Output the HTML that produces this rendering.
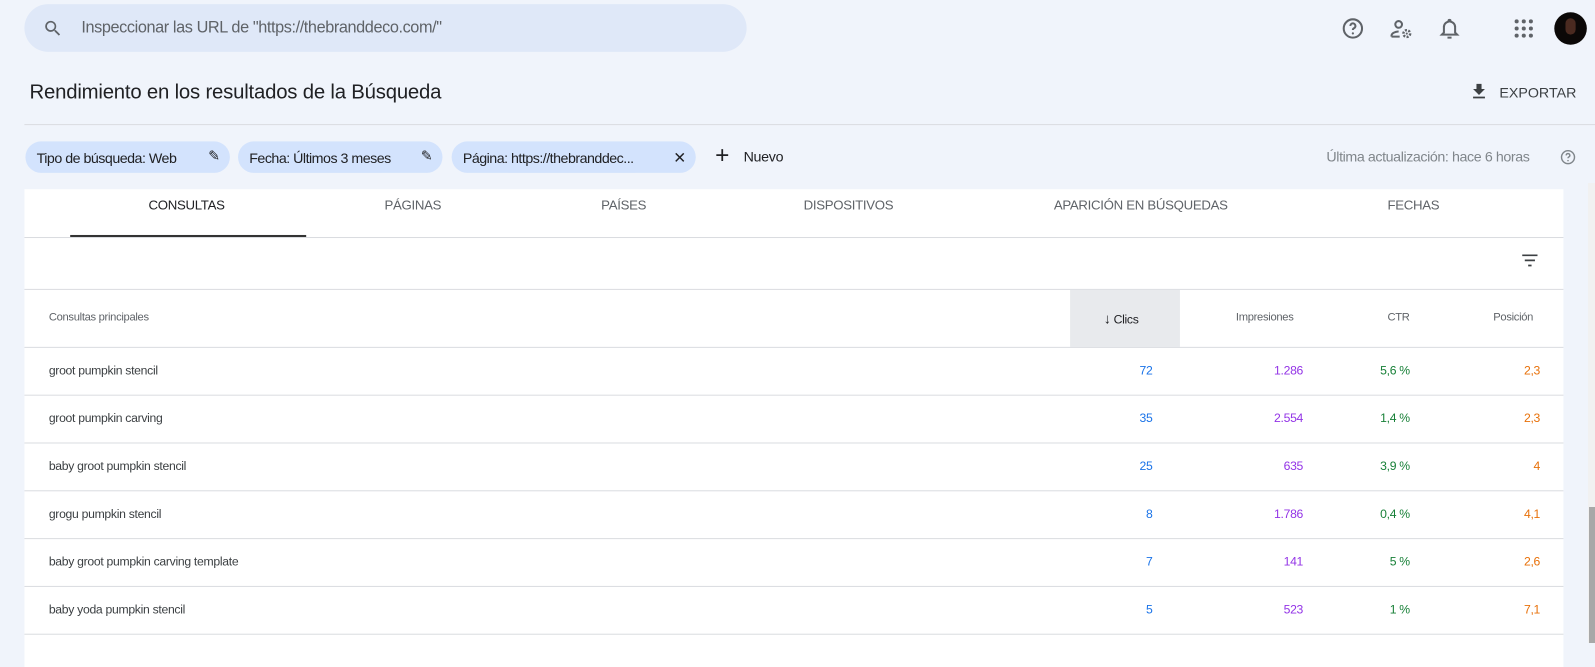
<!DOCTYPE html>
<html><head><meta charset="utf-8"><style>
*{margin:0;padding:0;box-sizing:border-box}
body{width:1595px;height:643px;overflow:hidden;background:#f0f4fb;font-family:"Liberation Sans",sans-serif;color:#3c4043;position:relative}
#w{position:absolute;left:0;top:0;width:1568px;height:632px;transform:scale(1.0172);transform-origin:0 0}
.abs{position:absolute}
.search{left:24px;top:4px;width:710px;height:47px;background:#dfe8f8;border-radius:24px}
.search span{position:absolute;left:56px;top:15px;font-size:16px;color:#5f6368;letter-spacing:-0.4px}
.title{left:29px;top:80px;font-size:20px;color:#202124;letter-spacing:-0.2px}
.hr{left:24px;top:122px;width:1571px;height:1px;background:#dadce0}
.chip{top:139px;height:31px;background:#d3e3fd;border-radius:16px;font-size:14px;color:#202124;padding:8px 11px;white-space:nowrap;letter-spacing:-0.5px}
.card{left:24px;top:186px;width:1513px;height:470px;background:#fff}
.tab{top:194px;font-size:13px;color:#5f6368;letter-spacing:-0.3px}
.line{height:1px;background:#dadce0;left:24px;width:1513px}
.cell{font-size:12px;letter-spacing:-0.3px}
.q{left:48px;color:#3c4043}
.r{text-align:right}
</style></head><body>
<div id="w">
<div class="abs search">
<svg class="abs" style="left:18px;top:14px" width="20" height="20" viewBox="0 0 24 24"><path d="M15.5 14h-.8l-.3-.3A6.5 6.5 0 1 0 9.5 16a6.5 6.5 0 0 0 4.2-1.6l.3.3v.8l5 5 1.5-1.5-5-5zm-6 0A4.5 4.5 0 1 1 14 9.5 4.5 4.5 0 0 1 9.5 14z" fill="#5f6368"/></svg>
<span>Inspeccionar las URL de "https://thebranddeco.com/"</span></div>
<svg class="abs" style="left:1318px;top:16px" width="24" height="24" viewBox="0 0 24 24"><circle cx="12" cy="12" r="9" fill="none" stroke="#5f6368" stroke-width="2"/><path d="M9.5 9.5a2.5 2.5 0 1 1 3.5 2.3c-.7.4-1 .9-1 1.7" fill="none" stroke="#5f6368" stroke-width="2"/><circle cx="12" cy="16.8" r="1.1" fill="#5f6368"/></svg>
<svg class="abs" style="left:1366px;top:16px" width="24" height="24" viewBox="0 0 24 24"><circle cx="9" cy="8" r="3.3" fill="none" stroke="#5f6368" stroke-width="2"/><path d="M2 20v-1c0-2.5 4-4 7-4" fill="none" stroke="#5f6368" stroke-width="2"/><path d="M2 20h8" stroke="#5f6368" stroke-width="2"/><circle cx="17" cy="17" r="3.3" fill="none" stroke="#5f6368" stroke-width="2.4" stroke-dasharray="2 1.4"/><circle cx="17" cy="17" r="1" fill="#5f6368"/></svg>
<svg class="abs" style="left:1413px;top:16px" width="24" height="24" viewBox="0 0 24 24"><path d="M12 3.5a1 1 0 0 1 1 1v.7A5.5 5.5 0 0 1 17.5 11v5l2 2H4.5l2-2v-5A5.5 5.5 0 0 1 11 5.2v-.7a1 1 0 0 1 1-1z" fill="none" stroke="#5f6368" stroke-width="2"/><path d="M10 21h4" stroke="#5f6368" stroke-width="2"/></svg>
<svg class="abs" style="left:1486px;top:16px" width="24" height="24" viewBox="0 0 24 24" fill="#5f6368"><circle cx="5" cy="5" r="2"/><circle cx="12" cy="5" r="2"/><circle cx="19" cy="5" r="2"/><circle cx="5" cy="12" r="2"/><circle cx="12" cy="12" r="2"/><circle cx="19" cy="12" r="2"/><circle cx="5" cy="19" r="2"/><circle cx="12" cy="19" r="2"/><circle cx="19" cy="19" r="2"/></svg>
<div class="abs" style="left:1528px;top:12px;width:32px;height:32px;border-radius:50%;background:#0b0807"><div class="abs" style="left:11px;top:6px;width:10px;height:16px;border-radius:5px;background:#4a2a20"></div></div>
<div class="abs title">Rendimiento en los resultados de la Búsqueda</div>
<svg class="abs" style="left:1444px;top:80px" width="20" height="20" viewBox="0 0 24 24"><path d="M19 9h-4V3H9v6H5l7 7 7-7zM5 18v2h14v-2H5z" fill="#3c4043"/></svg>
<div class="abs" style="left:1474px;top:83px;font-size:14px;color:#3c4043">EXPORTAR</div>
<div class="abs hr"></div>
<div class="abs chip" style="left:25px;width:201px">Tipo de búsqueda: Web <span style="position:absolute;right:10px;top:6px">✎</span></div>
<div class="abs chip" style="left:234px;width:201px">Fecha: Últimos 3 meses <span style="position:absolute;right:10px;top:6px">✎</span></div>
<div class="abs chip" style="left:444px;width:240px">Página: https://thebranddec... <span style="position:absolute;right:10px;top:7px;font-size:15px">✕</span></div>
<div class="abs" style="left:703px;top:141px;font-size:24px;color:#202124;line-height:24px">+</div>
<div class="abs" style="left:731px;top:146px;font-size:14px;color:#202124;letter-spacing:-0.3px">Nuevo</div>
<div class="abs" style="left:1304px;top:146px;font-size:14px;color:#80868b;letter-spacing:-0.4px">Última actualización: hace 6 horas</div>
<svg class="abs" style="left:1533px;top:146px" width="17" height="17" viewBox="0 0 24 24"><circle cx="12" cy="12" r="9" fill="none" stroke="#80868b" stroke-width="2"/><path d="M9.5 9.5a2.5 2.5 0 1 1 3.5 2.3c-.7.4-1 .9-1 1.7" fill="none" stroke="#80868b" stroke-width="2"/><circle cx="12" cy="16.8" r="1.1" fill="#80868b"/></svg>
<div class="abs card"></div>
<div class="abs tab" style="left:146px;color:#202124">CONSULTAS</div>
<div class="abs tab" style="left:378px">PÁGINAS</div>
<div class="abs tab" style="left:591px">PAÍSES</div>
<div class="abs tab" style="left:790px">DISPOSITIVOS</div>
<div class="abs tab" style="left:1036px">APARICIÓN EN BÚSQUEDAS</div>
<div class="abs tab" style="left:1364px">FECHAS</div>
<div class="abs" style="left:69px;top:231px;width:232px;height:2px;background:#333"></div>
<div class="abs line" style="top:233px"></div>
<svg class="abs" style="left:1494px;top:246px" width="20" height="20" viewBox="0 0 24 24"><path d="M3 6h18M6 12h12M10 18h4" stroke="#3c4043" stroke-width="2"/></svg>
<div class="abs line" style="top:284px"></div>
<div class="abs" style="left:1052px;top:285px;width:108px;height:56px;background:#e8eaed"></div>
<div class="abs cell q" style="top:306px;font-size:11px;color:#5f6368">Consultas principales</div>
<div class="abs cell" style="left:1085px;top:305px;color:#202124"><span style="font-size:14px">↓</span> Clics</div>
<div class="abs cell" style="left:1215px;top:306px;font-size:11px;color:#5f6368">Impresiones</div>
<div class="abs cell" style="left:1364px;top:306px;font-size:11px;color:#5f6368">CTR</div>
<div class="abs cell" style="left:1468px;top:306px;font-size:11px;color:#5f6368">Posición</div>
<div class="abs line" style="top:341px"></div>
<div class="abs line" style="top:388px"></div>
<div class="abs line" style="top:435px"></div>
<div class="abs line" style="top:482px"></div>
<div class="abs line" style="top:529px"></div>
<div class="abs line" style="top:576px"></div>
<div class="abs line" style="top:623px"></div>

<div class="abs cell q" style="top:357px">groot pumpkin stencil</div>
<div class="abs cell r" style="right:435px;top:357px;color:#1a73e8">72</div>
<div class="abs cell r" style="right:287px;top:357px;color:#9334e6">1.286</div>
<div class="abs cell r" style="right:182px;top:357px;color:#188038">5,6 %</div>
<div class="abs cell r" style="right:54px;top:357px;color:#e8710a">2,3</div>

<div class="abs cell q" style="top:404px">groot pumpkin carving</div>
<div class="abs cell r" style="right:435px;top:404px;color:#1a73e8">35</div>
<div class="abs cell r" style="right:287px;top:404px;color:#9334e6">2.554</div>
<div class="abs cell r" style="right:182px;top:404px;color:#188038">1,4 %</div>
<div class="abs cell r" style="right:54px;top:404px;color:#e8710a">2,3</div>

<div class="abs cell q" style="top:451px">baby groot pumpkin stencil</div>
<div class="abs cell r" style="right:435px;top:451px;color:#1a73e8">25</div>
<div class="abs cell r" style="right:287px;top:451px;color:#9334e6">635</div>
<div class="abs cell r" style="right:182px;top:451px;color:#188038">3,9 %</div>
<div class="abs cell r" style="right:54px;top:451px;color:#e8710a">4</div>

<div class="abs cell q" style="top:498px">grogu pumpkin stencil</div>
<div class="abs cell r" style="right:435px;top:498px;color:#1a73e8">8</div>
<div class="abs cell r" style="right:287px;top:498px;color:#9334e6">1.786</div>
<div class="abs cell r" style="right:182px;top:498px;color:#188038">0,4 %</div>
<div class="abs cell r" style="right:54px;top:498px;color:#e8710a">4,1</div>

<div class="abs cell q" style="top:545px">baby groot pumpkin carving template</div>
<div class="abs cell r" style="right:435px;top:545px;color:#1a73e8">7</div>
<div class="abs cell r" style="right:287px;top:545px;color:#9334e6">141</div>
<div class="abs cell r" style="right:182px;top:545px;color:#188038">5 %</div>
<div class="abs cell r" style="right:54px;top:545px;color:#e8710a">2,6</div>

<div class="abs cell q" style="top:592px">baby yoda pumpkin stencil</div>
<div class="abs cell r" style="right:435px;top:592px;color:#1a73e8">5</div>
<div class="abs cell r" style="right:287px;top:592px;color:#9334e6">523</div>
<div class="abs cell r" style="right:182px;top:592px;color:#188038">1 %</div>
<div class="abs cell r" style="right:54px;top:592px;color:#e8710a">7,1</div>
</div>
<div class="abs" style="left:1588px;top:183px;width:7px;height:460px;background:#f1f1f1"></div>
<div class="abs" style="left:1589px;top:507px;width:6px;height:136px;background:#a8a8a8"></div>
</body></html>
